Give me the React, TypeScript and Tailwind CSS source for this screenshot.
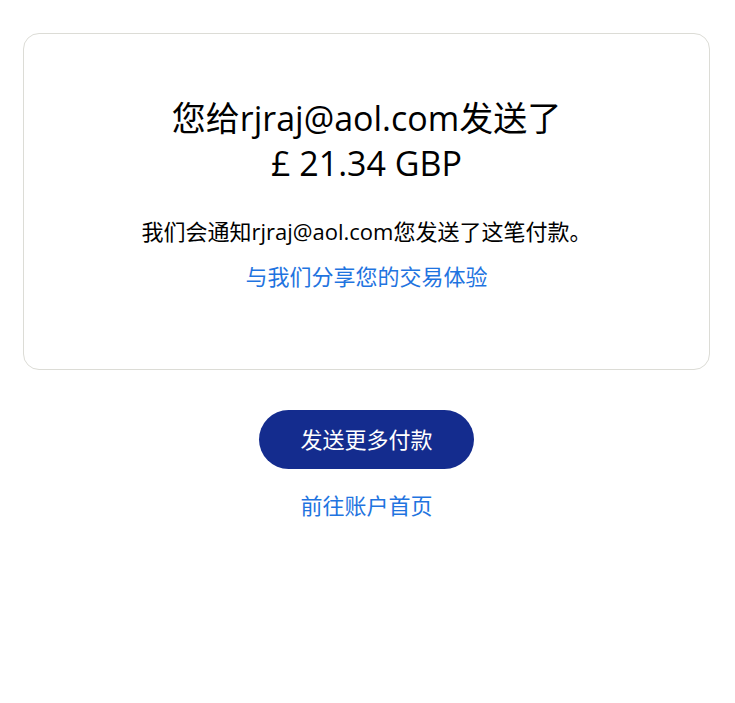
export default function App() {
  const font = { fontFamily: '"Open Sans", "Noto Sans CJK SC", sans-serif' };
  return (
    <div className="min-h-[703px] bg-white pt-[33px] pl-[23px]" style={font}>
      <div className="w-[687px] border border-[#dcdcd6] rounded-[16px] h-[337px] flex flex-col items-center pt-[62px]">
        <h1 className="text-[34px] leading-[45px] text-center text-black">
          您给rjraj@aol.com发送了
          <br />£ 21.34 GBP
        </h1>
        <p className="mt-[30px] text-[22px] leading-[30px] text-black">我们会通知rjraj@aol.com您发送了这笔付款。</p>
        <a className="mt-[15px] text-[22px] leading-[30px] text-[#1f74e0]">与我们分享您的交易体验</a>
      </div>
      <div className="w-[687px] flex flex-col items-center mt-[40px]">
        <button className="w-[215px] h-[59px] rounded-full bg-[#142c8e] text-white text-[22px]">发送更多付款</button>
        <a className="mt-[21px] text-[22px] leading-[30px] text-[#1f74e0]">前往账户首页</a>
      </div>
    </div>
  );
}
